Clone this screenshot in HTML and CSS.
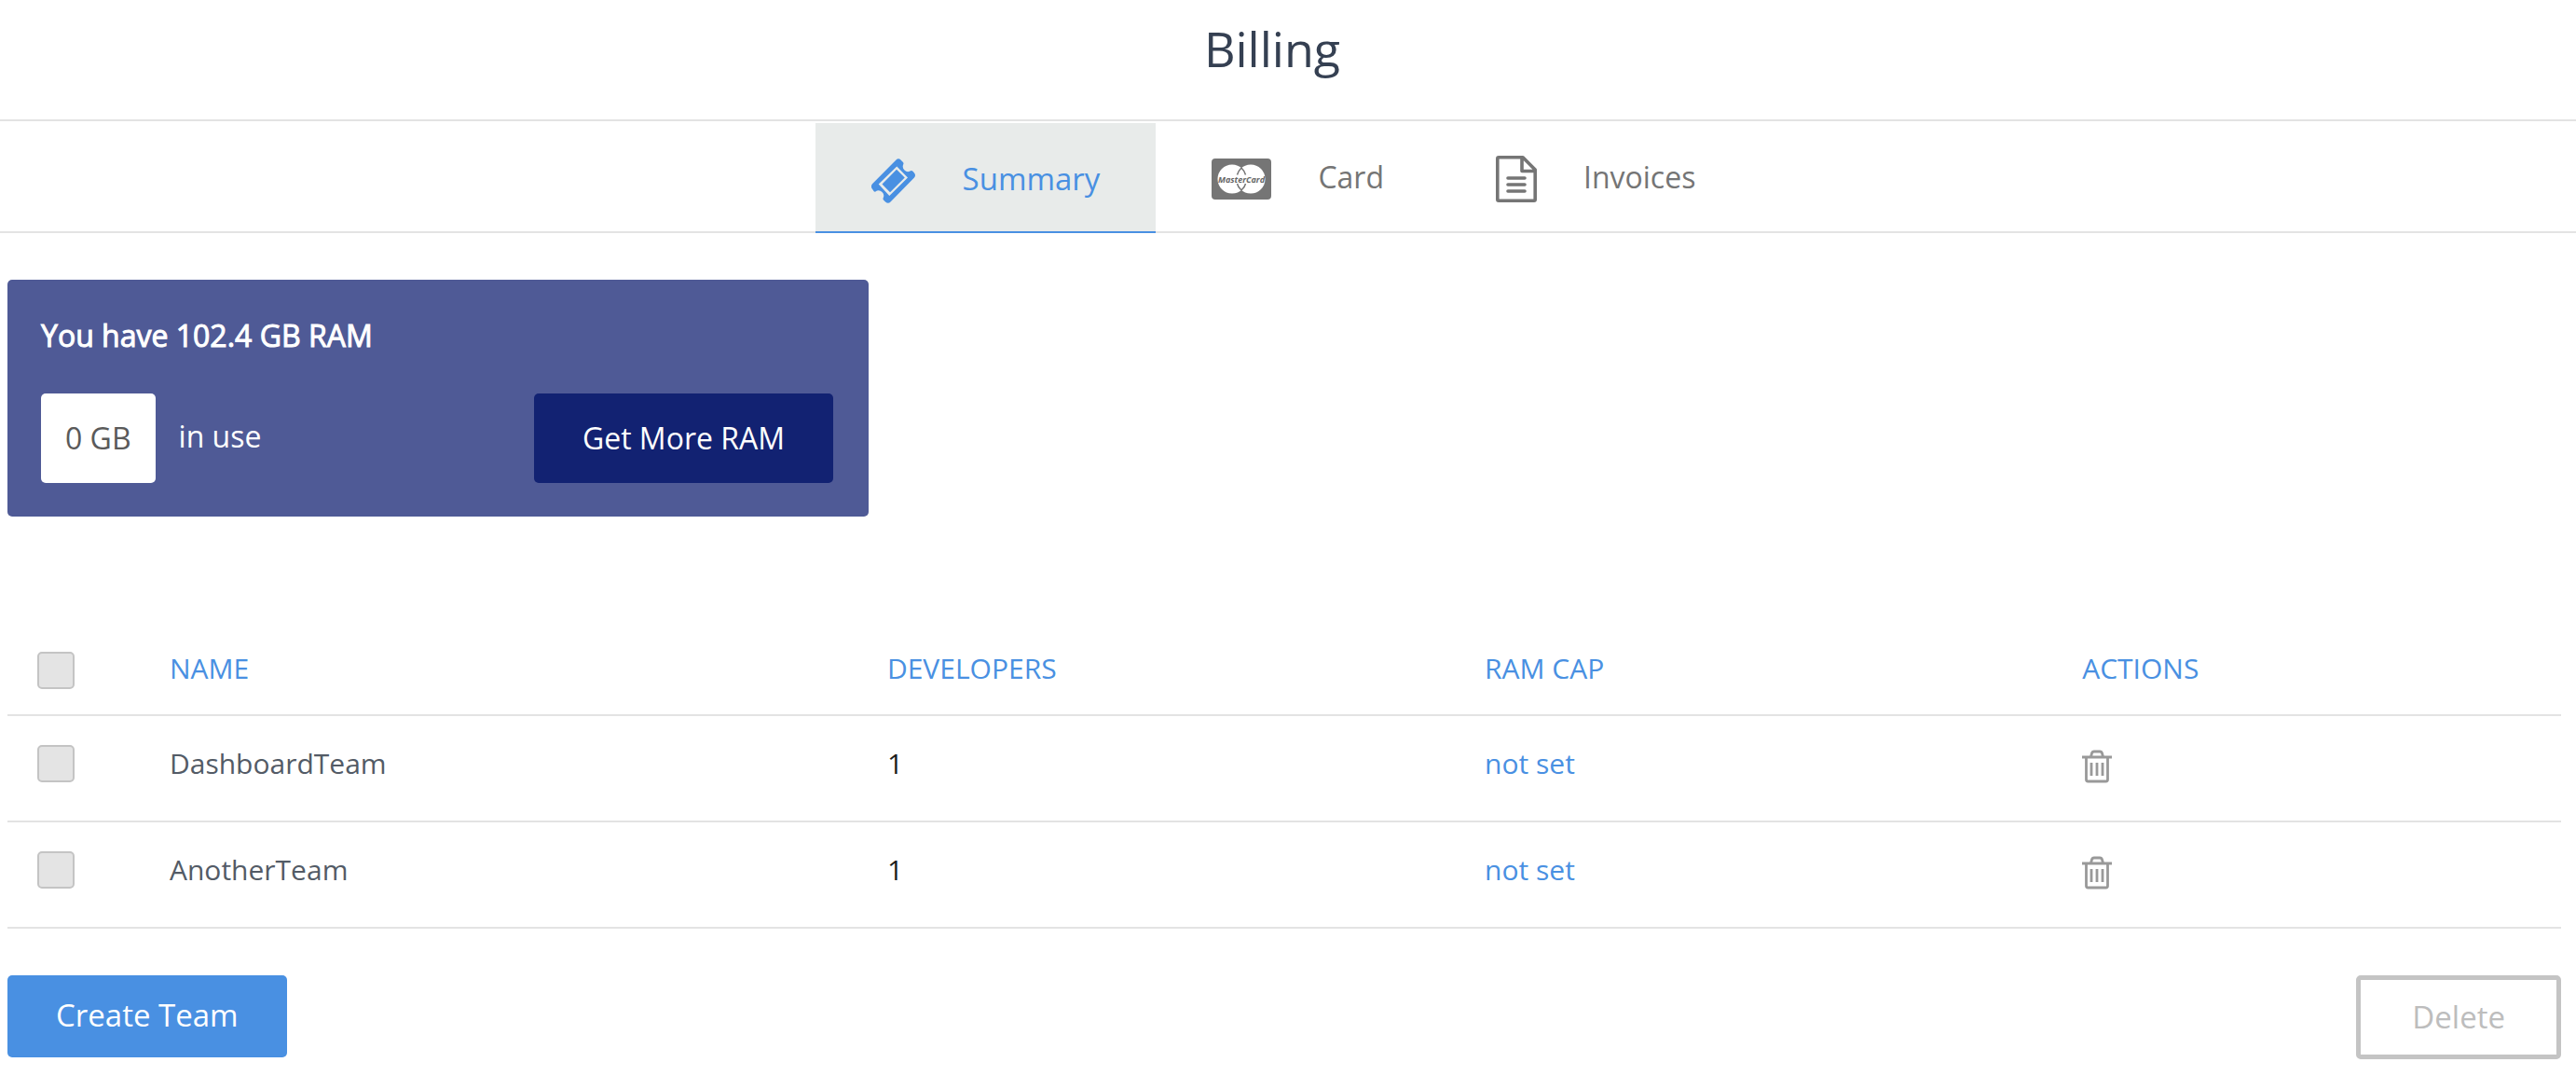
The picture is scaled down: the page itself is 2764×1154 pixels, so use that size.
FILE: index.html
```html
<!DOCTYPE html>
<html lang="en">
<head>
<meta charset="utf-8">
<meta name="viewport" content="width=device-width, initial-scale=1">
<title>Billing</title>
<link rel="stylesheet" href="styles.css">
</head>
<body>
<header class="page-header">
  <h1 class="page-title">Billing</h1>
</header>
<nav class="tabs" aria-label="Billing sections">
  <a class="tab tab-active" href="#summary" aria-current="page">
    <svg class="tab-icon" width="48" height="48" viewBox="0 0 48 48" aria-hidden="true">
      <path fill="currentColor" fill-rule="evenodd" d="M26.500 1.500Q29-.8 31.500 1.500L34 4Q35 5.200 34 7Q33 10 35.500 12.500Q38 15 41 13.800Q43 12 44.500 13.800L46 15.500Q48 18 46 20.500L20.500 46.500Q18 49 15 46.500L13 44.500Q12 43.300 13 41.500Q14 38.500 11.500 36Q9 33.500 6 34.500Q4 36.500 2.500 35L1.200 33Q-1.500 30 1.200 27ZM27.300 8.500L7.700 27.500L19.300 40L39 20.500ZM27 11.800L35.800 20.500L20 36.200L11.500 27.500Z"/>
    </svg>
    <span>Summary</span>
  </a>
  <a class="tab" href="#card">
    <svg class="tab-icon" width="64" height="44" viewBox="0 0 64 44" aria-hidden="true">
      <rect width="64" height="44" rx="4" fill="#757575"/>
      <circle cx="22" cy="22" r="15.500" fill="#fff"/>
      <circle cx="42" cy="22" r="15.500" fill="#fff"/>
      <path fill="none" stroke="#757575" stroke-width="1.500" d="M32 10Q28.500 13.500 27.500 17.500M32 10Q35.500 13.500 36.500 17.500M32 34Q28.500 31 27.500 27M32 34Q35.500 31 36.500 27"/>
      <text class="card-brand" x="32" y="26" text-anchor="middle">MasterCard</text>
    </svg>
    <span>Card</span>
  </a>
  <a class="tab" href="#invoices">
    <svg class="tab-icon" width="44" height="50" viewBox="0 0 44 50" aria-hidden="true">
      <path fill="none" stroke="currentColor" stroke-width="3.600" stroke-linejoin="round" stroke-linecap="round" d="M3 1.800H29L42.200 15V47Q42.200 48.200 41 48.200H3Q1.800 48.200 1.800 47V3Q1.800 1.800 3 1.800ZM28 2V16.500H42M13 24H31M13 31H31M13 38H31"/>
    </svg>
    <span>Invoices</span>
  </a>
</nav>
<main class="content">
  <section class="ram-card">
    <h2 class="ram-title">You have 102.4 GB RAM</h2>
    <div class="ram-row">
      <span class="ram-used">0 GB</span>
      <span class="ram-label">in use</span>
      <button class="button button-ram" type="button">Get More RAM</button>
    </div>
  </section>

  <table class="teams">
    <colgroup>
      <col class="col-select">
      <col class="col-name">
      <col class="col-developers">
      <col class="col-cap">
      <col class="col-actions">
    </colgroup>
    <thead>
      <tr>
        <th scope="col"><input class="check" type="checkbox" aria-label="Select all teams"></th>
        <th scope="col">NAME</th>
        <th scope="col">DEVELOPERS</th>
        <th scope="col">RAM CAP</th>
        <th scope="col">ACTIONS</th>
      </tr>
    </thead>
    <tbody>
      <tr>
        <td><input class="check" type="checkbox" aria-label="Select DashboardTeam"></td>
        <td class="team-name">DashboardTeam</td>
        <td>1</td>
        <td><a class="cap-link" href="#cap">not set</a></td>
        <td>
          <button class="trash" type="button" aria-label="Delete DashboardTeam">
            <svg width="32" height="36" viewBox="0 0 32 36" aria-hidden="true"><path fill="none" stroke="currentColor" stroke-width="2.800" d="M0 8H32M9.500 7.500L10.500 4Q11 2 13 2H19Q21 2 21.500 4L22.500 7.500M4.500 8V32Q4.500 34 6.500 34H25.500Q27.500 34 27.500 32V8M10 14V28M16 14V28M22 14V28"/></svg>
          </button>
        </td>
      </tr>
      <tr>
        <td><input class="check" type="checkbox" aria-label="Select AnotherTeam"></td>
        <td class="team-name">AnotherTeam</td>
        <td>1</td>
        <td><a class="cap-link" href="#cap">not set</a></td>
        <td>
          <button class="trash" type="button" aria-label="Delete AnotherTeam">
            <svg width="32" height="36" viewBox="0 0 32 36" aria-hidden="true"><path fill="none" stroke="currentColor" stroke-width="2.800" d="M0 8H32M9.500 7.500L10.500 4Q11 2 13 2H19Q21 2 21.500 4L22.500 7.500M4.500 8V32Q4.500 34 6.500 34H25.500Q27.500 34 27.500 32V8M10 14V28M16 14V28M22 14V28"/></svg>
          </button>
        </td>
      </tr>
    </tbody>
  </table>

  <div class="actions">
    <button class="button button-create" type="button">Create Team</button>
    <button class="button button-delete" type="button" disabled>Delete</button>
  </div>
</main>
</body>
</html>
```
FILE: styles.css
```css
* {
  box-sizing: border-box;
}

body {
  margin: 0;
  background: #fff;
  color: #1d1d1d;
  font-family: "Open Sans", sans-serif;
  font-size: 30px;
  line-height: 40px;
}

.page-header {
  padding: 0 34px 24px 0;
  border-bottom: 2px solid #e3e3e3;
  text-align: center;
}

.page-title {
  margin: 0;
  color: #354052;
  font-size: 52px;
  font-weight: 400;
  line-height: 104px;
}

.tabs {
  display: flex;
  justify-content: center;
  height: 120px;
  padding-right: 10px;
  box-shadow: inset 0 -2px #e3e3e3;
}

.tab {
  display: flex;
  align-items: center;
  gap: 50px;
  padding: 0 60px;
  color: #757575;
  font-size: 32px;
  text-decoration: none;
}

.tab-active {
  margin-top: 2px;
  padding-top: 4px;
  border-bottom: 2px solid #4990e2;
  background: #e8ebea;
  color: #4990e2;
  font-size: 33px;
}

.tab-icon {
  flex: none;
  margin-top: 4px;
}

.card-brand {
  fill: #666;
  font-family: "Open Sans", sans-serif;
  font-size: 9px;
  font-style: italic;
  font-weight: 700;
}

.content {
  padding: 50px 16px 20px 8px;
}

.ram-card {
  max-width: 924px;
  padding: 36px 38px 36px 36px;
  border-radius: 5px;
  background: #4f5a96;
  color: #fff;
}

.ram-title {
  margin: 0 0 38px;
  font-size: 32px;
  font-weight: 400;
  line-height: 48px;
  -webkit-text-stroke: 1px #fff;
}

.ram-row {
  display: flex;
  align-items: center;
  font-size: 32px;
}

.ram-used {
  padding: 0 26px;
  border-radius: 5px;
  background: #fff;
  color: #5a5a5a;
  line-height: 96px;
}

.ram-label {
  margin: 0 auto 4px 25px;
}

.button {
  padding: 0 52px 2px;
  border: 0;
  border-radius: 5px;
  color: #fff;
  font-family: inherit;
  font-size: 32px;
}

.button-ram {
  height: 96px;
  background: #122272;
}

.teams {
  width: 100%;
  margin: 113px 0 50px;
  border-collapse: collapse;
  table-layout: fixed;
}

.col-select {
  width: 6.35%;
}

.col-name {
  width: 28.1%;
}

.col-developers,
.col-cap {
  width: 23.4%;
}

.teams th,
.teams td {
  height: 114px;
  padding: 31px 0 0;
  border-bottom: 2px solid #e3e3e3;
  font-weight: 400;
  text-align: left;
  vertical-align: top;
}

.teams th {
  height: 100px;
  padding-top: 30px;
  color: #4990e2;
}

.teams th:first-child,
.teams td:first-child {
  padding-left: 32px;
}

.teams th:first-child {
  padding-top: 32px;
}

.check {
  display: block;
  width: 40px;
  height: 40px;
  margin: 0;
  border: 2px solid #c4c4c4;
  border-radius: 5px;
  background: #e4e4e4;
  appearance: none;
}

.team-name {
  color: #535b66;
}

.cap-link {
  color: #4990e2;
  text-decoration: none;
}

.trash {
  display: block;
  padding: 5px 0 0;
  border: 0;
  background: none;
  color: #999;
}

.trash svg {
  display: block;
}

.actions {
  display: flex;
  align-items: flex-start;
  justify-content: space-between;
}

.button-create {
  height: 88px;
  padding-bottom: 4px;
  background: #4990e2;
  font-size: 33px;
}

.button-delete {
  height: 90px;
  padding: 0 55px 2px;
  border: 5px solid #c4c4c4;
  background: #fff;
  color: #bdbdbd;
  font-size: 33px;
}
```
